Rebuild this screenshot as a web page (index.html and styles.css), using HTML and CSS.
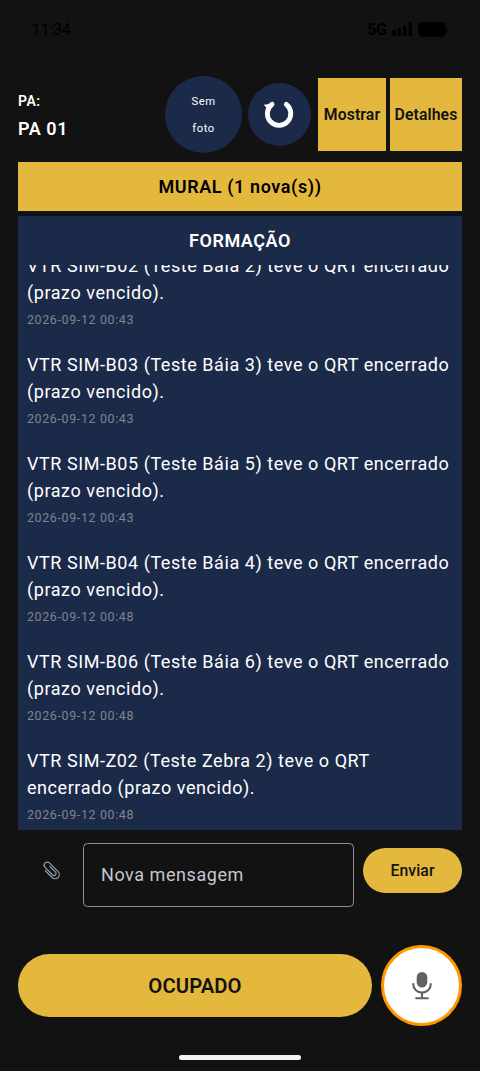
FILE: index.html
```html
<!DOCTYPE html>
<html lang="pt-BR">
<head>
<meta charset="utf-8">
<title>Mural</title>
<link rel="stylesheet" href="styles.css">
</head>
<body>
<div class="status">
  <span class="clock">11:34</span>
  <span class="network">5G</span>
  <svg class="signal" width="20" height="14" viewBox="0 0 20 14"><rect x="0" y="8" width="4" height="6" rx="1.5"/><rect x="5.5" y="5.5" width="3.5" height="8.5" rx="1.5"/><rect x="11" y="3" width="3.5" height="11" rx="1.5"/><rect x="16.5" y="0" width="3.5" height="14" rx="1.5"/></svg>
  <svg class="battery" width="31" height="15" viewBox="0 0 31 15"><rect width="28" height="15" rx="5"/><path d="M29 4.5q2.5 3 0 6z"/></svg>
</div>
<header class="header">
  <div class="post"><div class="post-label">PA:</div><div class="post-name">PA 01</div></div>
  <div class="avatar"><span>Sem</span><span>foto</span></div>
  <button class="refresh" aria-label="Atualizar"><svg width="32" height="30" viewBox="0 0 32 30"><path d="M9.1 5.2A11.7 11.7 0 1 0 23.3 5.4" fill="none" stroke="#fff" stroke-width="4.8" stroke-linecap="round"/><path d="M.8 5.8 10.2 4.4 5.2 13.2 3.5 8.8z" fill="#fff"/></svg></button>
  <button class="square show">Mostrar</button>
  <button class="square details">Detalhes</button>
</header>
<button class="mural">MURAL (1 nova(s))</button>
<main class="panel">
  <h1 class="panel-title">FORMAÇÃO</h1>
  <div class="list">
    <article class="item"><p>VTR SIM-B02 (Teste Báia 2) teve o QRT encerrado (prazo vencido).</p><time>2026-09-12 00:43</time></article>
    <article class="item"><p>VTR SIM-B03 (Teste Báia 3) teve o QRT encerrado (prazo vencido).</p><time>2026-09-12 00:43</time></article>
    <article class="item"><p>VTR SIM-B05 (Teste Báia 5) teve o QRT encerrado (prazo vencido).</p><time>2026-09-12 00:43</time></article>
    <article class="item"><p>VTR SIM-B04 (Teste Báia 4) teve o QRT encerrado (prazo vencido).</p><time>2026-09-12 00:48</time></article>
    <article class="item"><p>VTR SIM-B06 (Teste Báia 6) teve o QRT encerrado (prazo vencido).</p><time>2026-09-12 00:48</time></article>
    <article class="item"><p>VTR SIM-Z02 (Teste Zebra 2) teve o QRT encerrado (prazo vencido).</p><time>2026-09-12 00:48</time></article>
  </div>
</main>
<div class="composer">
  <button class="attach" aria-label="Anexar"><svg width="20" height="20" viewBox="0 0 20 20" fill="none" stroke-linecap="round"><g transform="rotate(-45 10 10)"><path d="M12.4 6v8a2 2 0 0 1-4 0V3.2a3.1 3.1 0 0 1 6.2 0v12.2a4.2 4.2 0 0 1-8.4 0V5.8" stroke="#8b9eb5" stroke-width="1.2"/></g></svg></button>
  <div class="field">Nova mensagem</div>
  <button class="send">Enviar</button>
</div>
<footer class="actions">
  <button class="busy">OCUPADO</button>
  <button class="mic" aria-label="Gravar áudio"><svg width="20" height="28" viewBox="0 0 20 28"><rect x="4.7" y="0" width="10.6" height="15.5" rx="5.3" fill="#606165"/><path d="M1.3 12v.8a8.7 7.8 0 0 0 17.4 0V12M10 20.7V26M4.2 26.2h11.6" fill="none" stroke="#606165" stroke-width="2.1" stroke-linecap="round"/></svg></button>
</footer>
<div class="home-bar"></div>
</body>
</html>
```
FILE: styles.css
```css
* { box-sizing: border-box; }
body {
  margin: 0;
  width: 480px;
  height: 1071px;
  padding: 0 18px;
  overflow: hidden;
  background: #121212;
  color: #fff;
  font-family: Roboto, sans-serif;
  display: flex;
  flex-direction: column;
}
button {
  border: 0;
  padding: 0;
  font: inherit;
  color: #121212;
  background: #e4b83c;
  display: flex;
  align-items: center;
  justify-content: center;
  flex: none;
  white-space: nowrap;
}
svg { display: block; flex: none; }
.status {
  height: 58px;
  flex: none;
  display: flex;
  align-items: center;
  padding: 0 13px 0 13.5px;
  color: #000;
}
.clock { font-size: 16px; letter-spacing: -.1px; margin-right: auto; }
.network { font-size: 16px; font-weight: 700; margin-right: 5px; }
.signal { margin-right: 6px; }
.header {
  height: 77px;
  margin-top: 18px;
  flex: none;
  display: flex;
  align-items: center;
}
.post { width: 147px; line-height: 27px; font-weight: 600; letter-spacing: .56px; }
.post-label { font-size: 14px; }
.post-name { font-size: 18px; }
.avatar {
  width: 77px;
  height: 77px;
  border-radius: 50%;
  background: #1c2a4a;
  display: flex;
  flex-direction: column;
  align-items: center;
  justify-content: center;
  font-size: 11.25px;
  line-height: 27px;
  letter-spacing: .56px;
}
.refresh {
  width: 63px;
  height: 63px;
  margin-left: 6px;
  border-radius: 50%;
  background: #1c2a4a;
}
.refresh svg { margin: 0 1px 1px 0; }
.square { height: 73px; font-size: 15.75px; font-weight: 600; letter-spacing: .11px; }
.show { width: 68px; margin-left: 7px; }
.details { width: 72px; margin-left: 4px; }
.mural {
  height: 49px;
  margin-top: 9px;
  font-size: 18px;
  font-weight: 600;
  letter-spacing: .6px;
  color: #000;
}
.panel {
  height: 614px;
  margin-top: 5px;
  flex: none;
  background: #1c2a4a;
  display: flex;
  flex-direction: column;
}
.panel-title {
  height: 49px;
  margin: 0;
  line-height: 49px;
  text-align: center;
  font-size: 18px;
  font-weight: 600;
  letter-spacing: .56px;
}
.list {
  flex: 1;
  min-height: 0;
  overflow: hidden;
  padding: 0 9px 2px;
  display: flex;
  flex-direction: column;
  justify-content: flex-end;
  gap: 18px;
}
.item { flex: none; line-height: 27px; letter-spacing: .56px; }
.item p { margin: 0; font-size: 18px; }
.item time { display: block; font-size: 12.4px; letter-spacing: .66px; color: #81848c; }
.composer {
  margin-top: 13px;
  height: 64px;
  flex: none;
  display: flex;
}
.attach { width: 65px; height: 56px; background: none; }
.field {
  width: 271px;
  height: 64px;
  border: 1px solid #918f99;
  border-radius: 4.5px;
  padding-left: 17px;
  line-height: 62px;
  font-size: 18px;
  letter-spacing: .56px;
  color: #c7c5d0;
}
.send {
  width: 99px;
  height: 45px;
  margin: 5px 0 0 9px;
  border-radius: 23px;
  font-size: 15.75px;
  font-weight: 500;
  letter-spacing: .11px;
}
.actions {
  height: 81px;
  margin-top: 38px;
  flex: none;
  display: flex;
  align-items: center;
  justify-content: space-between;
}
.busy {
  width: 354px;
  height: 63px;
  border-radius: 32px;
  font-size: 20.25px;
  font-weight: 600;
  letter-spacing: .11px;
}
.mic {
  width: 81px;
  height: 81px;
  border-radius: 50%;
  border: 3.4px solid #ff9800;
  background: #fff;
}
.home-bar {
  width: 122px;
  height: 5px;
  margin: 29px auto 0;
  border-radius: 3px;
  background: #f2f2f4;
  flex: none;
}
```
